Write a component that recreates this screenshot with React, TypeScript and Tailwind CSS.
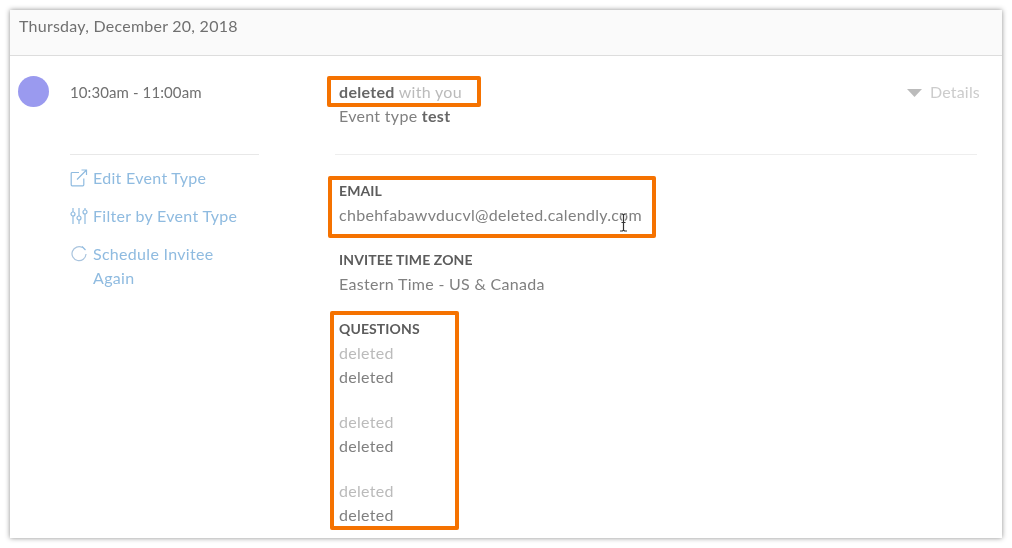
import React from 'react';

const font = { fontFamily: '"Lato", "Liberation Sans", sans-serif' };

const Label: React.FC<{ children: React.ReactNode }> = ({ children }) => (
  <div className="h-6 text-[14px] leading-6 font-bold text-[#5c5c5c] tracking-[0.1px]">{children}</div>
);

const Line: React.FC<{ light?: boolean; children: React.ReactNode }> = ({ light, children }) => (
  <div className={`h-6 text-[16px] leading-6 tracking-[0.3px] ${light ? 'text-[#bbb]' : 'text-[#808080]'}`}>{children}</div>
);

const ExternalIcon = () => (
  <svg width="18" height="18" viewBox="0 0 18 18" fill="none" stroke="#8fbbe0" strokeWidth="1.2" className="shrink-0">
    <path d="M9 3.500H2.200a1 1 0 0 0-1 1v11.300a1 1 0 0 0 1 1h10.600a1 1 0 0 0 1-1V9.500" />
    <path d="M7 10.500 16.500 1M11.500 1h5v5" />
  </svg>
);

const SlidersIcon = () => (
  <svg width="18" height="18" viewBox="0 0 18 18" fill="none" stroke="#8fbbe0" strokeWidth="1.2" className="shrink-0">
    <path d="M3 1v4M3 9v8M9 1v8M9 13v4M15 1v2M15 7v10" />
    <circle cx="3" cy="7" r="2" />
    <circle cx="9" cy="11" r="2" />
    <circle cx="15" cy="5" r="2" />
  </svg>
);

const RefreshIcon = () => (
  <svg width="18" height="18" viewBox="0 0 18 18" fill="none" stroke="#a9c4de" strokeWidth="1.2" className="shrink-0">
    <path d="M12.500 2.600A7 7 0 1 0 16 9" />
    <path d="M12 1.500 15.500 5" stroke="#8fbbe0" />
  </svg>
);

const Cursor = () => (
  <svg width="9" height="19" viewBox="0 0 9 19" fill="none" className="absolute left-[609px] top-[203px]">
    <path d="M1 1h2.500l1 1 1-1H8M4.500 2v15M1 18h2.500l1-1 1 1H8M2.500 9.500h4" stroke="#fff" strokeWidth="2.500" />
    <path d="M1 1h2.500l1 1 1-1H8M4.500 2v15M1 18h2.500l1-1 1 1H8M2.500 9.500h4" stroke="#333" strokeWidth="1.200" />
  </svg>
);

const App: React.FC = () => {
  return (
    <div className="w-[1012px] h-[548px] bg-white pt-2.5 pl-2.5 overflow-hidden" style={font}>
      <div className="relative w-[992px] h-[528px] bg-white shadow-[0_0_5px_rgba(0,0,0,0.45)]">
        <div className="h-[46px] bg-[#fafafa] border-b border-[#ddd] pl-[9px] pt-1 text-[16px] leading-6 tracking-[0.25px] text-[#707070] blur-[0.3px]">
          Thursday, December 20, 2018
        </div>

        <div className="flex pt-[20px] blur-[0.3px]">
          <div className="w-[329px] flex pl-2 shrink-0">
            <div className="w-[31px] h-[31px] rounded-full bg-[#9a9aef] shrink-0" />
            <div className="ml-[21px] w-[189px]">
              <div className="h-[32px] text-[15px] leading-[32px] text-[#707070] tracking-[0.1px]">10:30am - 11:00am</div>
              <div className="mt-[46px] border-t border-[#e8e8e8] pt-[11px] text-[16px] leading-6 tracking-[0.3px] text-[#8fbbe0]">
                <div className="flex gap-[5px] h-6 items-center"><ExternalIcon />Edit Event Type</div>
                <div className="flex gap-[5px] h-6 items-center mt-[14px]"><SlidersIcon />Filter by Event Type</div>
                <div className="flex gap-[5px] mt-[14px]">
                  <div className="h-6 flex items-center"><RefreshIcon /></div>
                  <div>Schedule Invitee<br />Again</div>
                </div>
              </div>
            </div>
          </div>

          <div className="flex-1 pr-[22px]">
            <div className="flex justify-between pt-1">
              <div>
                <div className="h-6 text-[16px] leading-6 tracking-[0.3px] text-[#bbb]"><span className="font-bold text-[#666]">deleted</span> with you</div>
                <div className="h-6 text-[16px] leading-6 tracking-[0.3px] text-[#808080]">Event type <span className="font-bold text-[#666]">test</span></div>
              </div>
              <div className="flex items-start gap-2 h-6 text-[16px] leading-6 tracking-[0.2px] text-[#ccc]">
                <svg width="15" height="8" viewBox="0 0 15 8" className="mt-[9px]"><path d="M0 0h15L7.500 8z" fill="#bbb" /></svg>
                Details
              </div>
            </div>
            <div className="border-t border-[#eee] -ml-1 mr-[3px] mt-[26px]" />
            <div className="pt-6">
              <Label>EMAIL</Label>
              <Line>chbehfabawvducvl@deleted.calendly.com</Line>
              <div className="mt-[21px]"><Label>INVITEE TIME ZONE</Label></div>
              <Line>Eastern Time - US &amp; Canada</Line>
              <div className="mt-[21px]"><Label>QUESTIONS</Label></div>
              <Line light>deleted</Line>
              <Line>deleted</Line>
              <div className="mt-[21px]"><Line light>deleted</Line></div>
              <Line>deleted</Line>
              <div className="mt-[21px]"><Line light>deleted</Line></div>
              <Line>deleted</Line>
            </div>
          </div>
        </div>

        <div className="absolute left-[317px] top-[66px] w-[154px] h-[31px] border-[4px] border-[#f57200] rounded-[2px]" />
        <div className="absolute left-[318px] top-[166px] w-[328px] h-[62px] border-[4px] border-[#f57200] rounded-[2px]" />
        <div className="absolute left-[320px] top-[301px] w-[129px] h-[219px] border-[4px] border-[#f57200] rounded-[2px]" />
        <Cursor />
      </div>
    </div>
  );
};

export default App;
